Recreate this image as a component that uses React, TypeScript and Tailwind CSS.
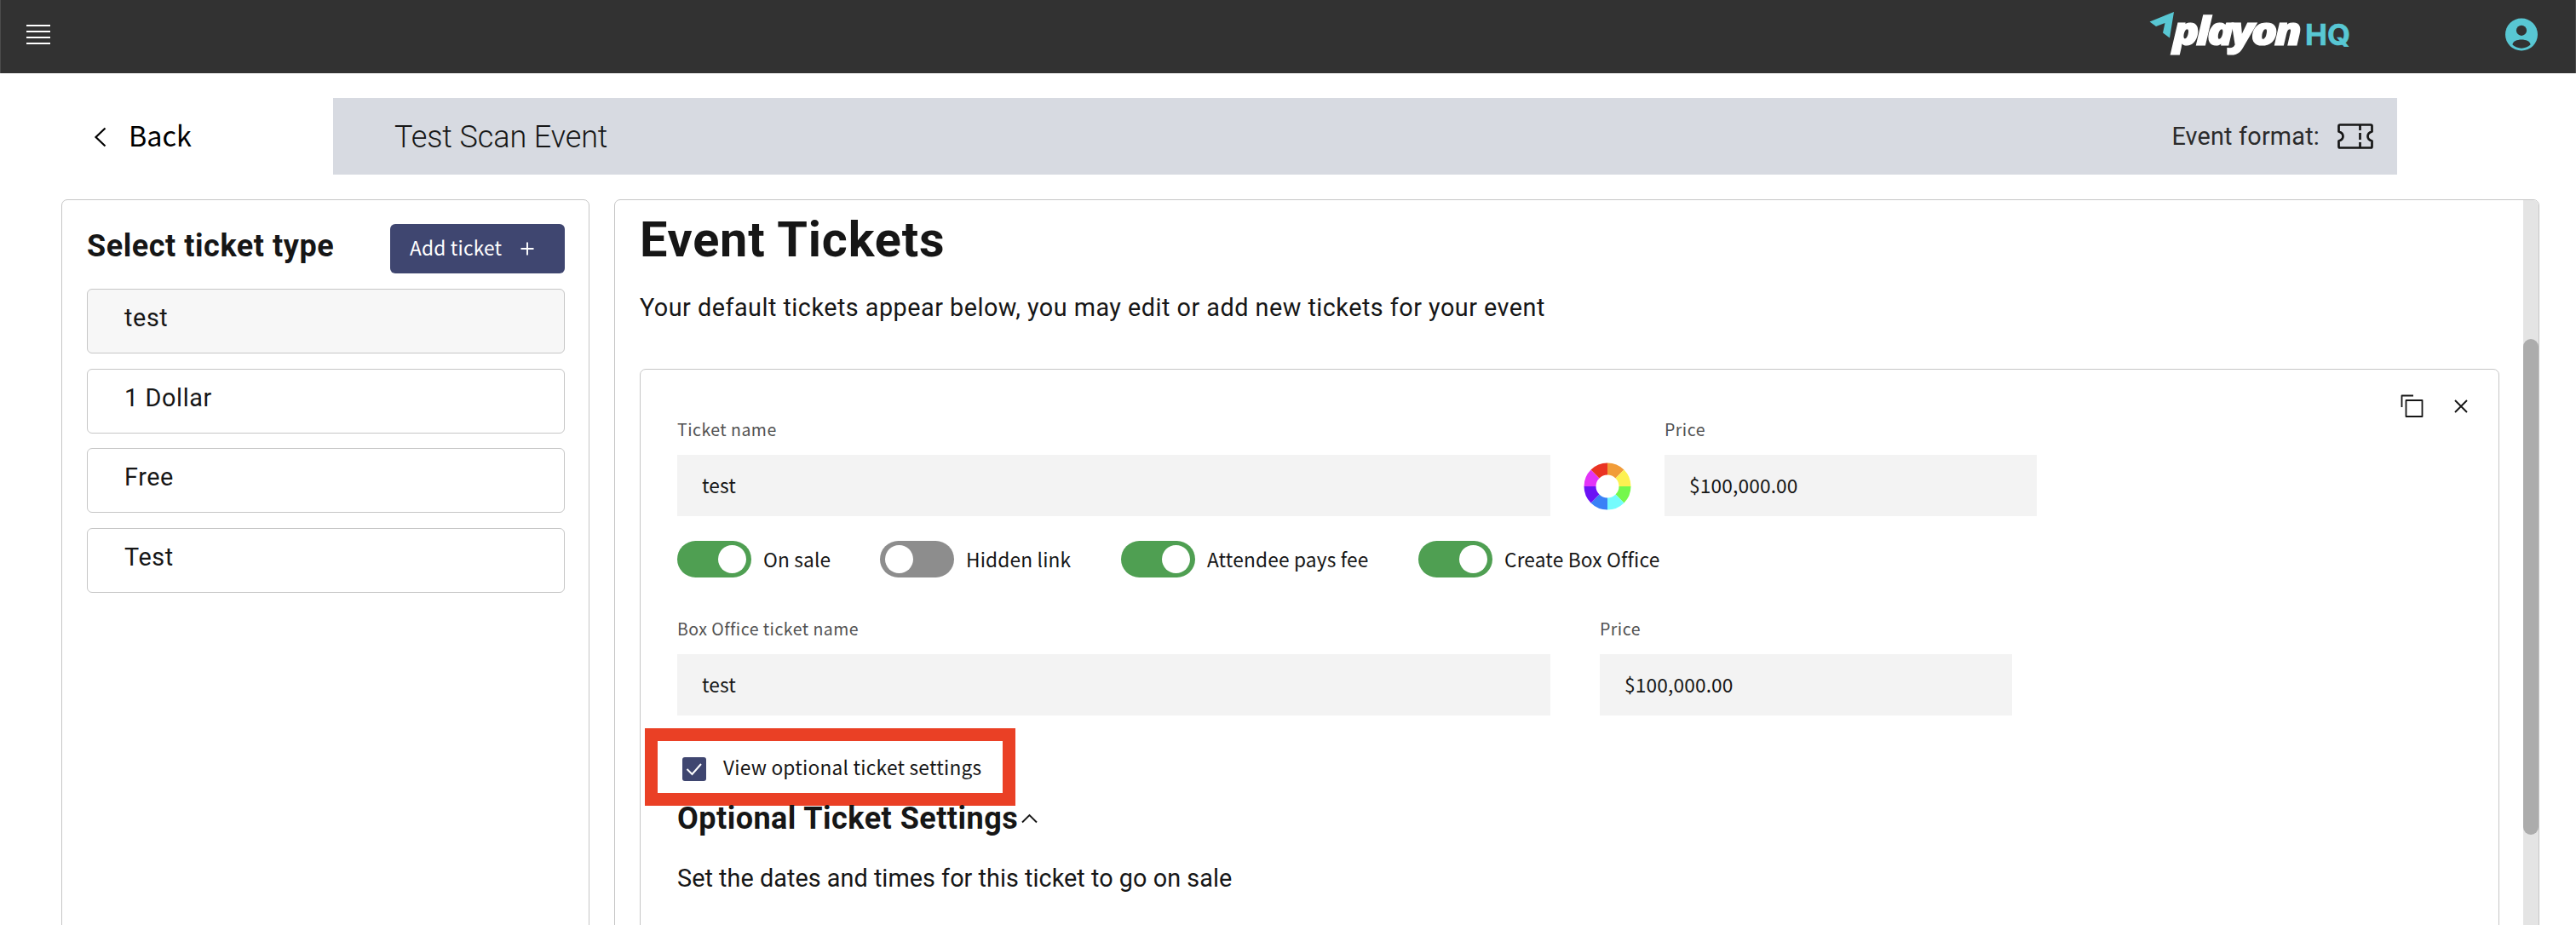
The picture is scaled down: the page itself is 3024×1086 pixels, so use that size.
import type { ReactNode } from "react";

const plex = "font-['Roboto',sans-serif]";
const source = "font-['Noto_Sans_CJK_JP',sans-serif]";

function Line({ className, children }: { className: string; children: ReactNode }) {
  return <div className={`whitespace-nowrap ${className}`}>{children}</div>;
}

function Logo() {
  return (
    <svg width="240" height="86" viewBox="2520 0 240 86" className="block">
      <path d="M2551 14 L2522.5 25.5 L2530 31 L2540.5 27 L2538 38.5 L2546 44.5 Z" fill="#58c7d3" />
      <text transform="translate(2549.5 52.7) scale(1.12 1)" letterSpacing="-3.4" fill="#fff" stroke="#fff" strokeWidth="1.2" fontFamily="Open Sans, sans-serif" fontWeight="800" fontStyle="italic" fontSize="46">playon</text>
      <text x="2705" y="52.7" textLength="53" lengthAdjust="spacingAndGlyphs" fill="#58c7d3" stroke="#58c7d3" strokeWidth="0.6" fontFamily="Inter, sans-serif" fontWeight="700" fontSize="34">HQ</text>
    </svg>
  );
}

function Toggle({ on, label, className }: { on: boolean; label: string; className: string }) {
  return (
    <div className={`flex h-[43px] items-center ${className}`}>
      <div className={`flex h-[43px] w-[87px] shrink-0 items-center rounded-full px-[6px] ${on ? "justify-end bg-[#4f9f52]" : "justify-start bg-[#8d8d8d]"}`}>
        <div className="size-[33px] rounded-full bg-white" />
      </div>
      <Line className={`ml-[14px] mt-px text-[22.7px] leading-[32px] tracking-[0.17px] ${source}`}>{label}</Line>
    </div>
  );
}

function Field({ label, value, className }: { label: string; value: string; className: string }) {
  return (
    <div className={className}>
      <Line className={`-mt-px text-[19.5px] leading-[28px] tracking-[0.48px] text-[#525252] ${source}`}>{label}</Line>
      <div className="mt-[16px] flex h-[72px] items-center bg-[#f3f3f3] pl-[29px]">
        <Line className={`text-[22.7px] leading-[32px] tracking-[0.15px] ${source}`}>{value}</Line>
      </div>
    </div>
  );
}

const wheel = ["#f19c38", "#fdf151", "#75f84c", "#74fbfd", "#3a81f6", "#6b12f5", "#e333f7", "#ea3323"];

function ColorWheel() {
  const p = (r: number, i: number) => {
    const a = (i * Math.PI) / 4;
    return `${28 + r * Math.sin(a)} ${28 - r * Math.cos(a)}`;
  };
  return (
    <svg width="56" height="56" className="block">
      {wheel.map((c, i) => (
        <path key={c} fill={c} d={`M${p(13.5, i)} L${p(27.5, i)} A27.5 27.5 0 0 1 ${p(27.5, i + 1)} L${p(13.5, i + 1)} A13.5 13.5 0 0 0 ${p(13.5, i)}Z`} />
      ))}
    </svg>
  );
}

const tickets = [
  { name: "test", active: true },
  { name: "1 Dollar", active: false },
  { name: "Free", active: false },
  { name: "Test", active: false },
];

export default function App() {
  return (
    <div className="flex h-[1086px] w-[3024px] flex-col overflow-hidden bg-white text-[#161616]">
      <header className="flex h-[86px] shrink-0 items-start border-x border-[#4b4b4b] bg-[#323232]">
        <div className="ml-[30px] mt-[29px] flex flex-col gap-[5px]">
          {[0, 1, 2, 3].map((i) => (
            <div key={i} className="h-[2px] w-[28px] bg-white" />
          ))}
        </div>
        <div className="ml-auto"><Logo /></div>
        <svg width="38" height="40" viewBox="0 0 38 40" className="ml-[180px] mr-[44px] mt-[21px]">
          <circle cx="19" cy="19.5" r="19" fill="#58c7d3" />
          <circle cx="19" cy="14.8" r="6.1" fill="#323232" />
          <path d="M8.5 31.5 C8.5 23.5 29.5 23.5 29.5 31.5 C24 37 14 37 8.5 31.5Z" fill="#323232" />
        </svg>
      </header>

      <div className="mt-[29px] flex h-[90px] shrink-0">
        <div className="flex w-[391px] items-center pl-[110px] text-black">
          <svg width="15" height="24" className="mt-[2px]" fill="none" stroke="currentColor" strokeWidth="2.2"><path d="M13.5 1.5 L2.5 12 L13.5 22.5" /></svg>
          <Line className={`-mt-[4px] ml-[26px] text-[32.4px] leading-[44px] ${source}`}>Back</Line>
        </div>
        <div className="flex w-[2423px] items-center bg-[#d7dae1] pl-[72px]">
          <Line className={`mt-px text-[36px] font-light leading-[44px] tracking-[-0.1px] ${plex}`}>Test Scan Event</Line>
          <Line className={`ml-auto text-[28.8px] leading-[36px] tracking-[0.2px] text-[#2b2b2b] ${plex}`}>Event format:</Line>
          <svg width="42" height="30" viewBox="0 0 42 30" className="ml-[21px] mr-[28px]" fill="none" stroke="#161616" strokeWidth="2.7" strokeLinejoin="round">
            <path d="M3 1.5 H39 Q40.5 1.5 40.5 3 V9.5 Q35.5 11 35.5 15 Q35.5 19 40.5 20.5 V27 Q40.5 28.5 39 28.5 H3 Q1.5 28.5 1.5 27 V20.5 Q6.5 19 6.5 15 Q6.5 11 1.5 9.5 V3 Q1.5 1.5 3 1.5Z" />
            <path d="M26.5 2 V8 M26.5 11 V19 M26.5 22 V28" />
          </svg>
        </div>
      </div>

      <div className="mt-[29px] flex h-[900px] shrink-0 pl-[72px]">
        <aside className="h-full w-[620px] rounded-[7px] border border-[#c6c6c6] pl-[29px] pr-[28px]">
          <div className="mt-[28px] flex h-[58px] items-start justify-between">
            <Line className={`mt-[3px] text-[36px] font-bold leading-[46px] tracking-[0.55px] ${plex}`}>Select ticket type</Line>
            <div className={`flex h-[58px] w-[205px] items-center rounded-[6px] bg-[#3f4670] pl-[23px] text-white ${source}`}>
              <Line className="-mt-[2px] w-[130px] text-[22.7px] leading-[32px] tracking-[0.2px]">Add ticket</Line>
              <svg width="16" height="16" stroke="currentColor" strokeWidth="1.9"><path d="M8 0.5 V15.5 M0.5 8 H15.5" /></svg>
            </div>
          </div>
          <div className="mt-[18px] flex flex-col gap-[17.7px]">
            {tickets.map((t) => (
              <div key={t.name} className={`h-[76px] rounded-[6px] border border-[#c6c6c6] pl-[43px] pt-[14px] ${t.active ? "bg-[#f7f7f7]" : "bg-white"}`}>
                <Line className={`text-[28.8px] leading-[38px] tracking-[0.6px] ${plex}`}>{t.name}</Line>
              </div>
            ))}
          </div>
        </aside>

        <main className="ml-[29px] flex h-full w-[2260px] overflow-hidden rounded-[7px] border border-[#c6c6c6]">
          <div className="w-[2240px] pl-[29px]">
            <Line className={`mt-[11px] text-[57.6px] font-bold leading-[72px] tracking-[0.85px] ${plex}`}>Event Tickets</Line>
            <Line className={`mt-[23px] text-[28.8px] leading-[40px] tracking-[0.48px] ${plex}`}>Your default tickets appear below, you may edit or add new tickets for your event</Line>
            <section className="relative mt-[52px] h-[700px] w-[2183px] rounded-[7px] border border-[#c6c6c6] pl-[43px] pt-[57px]">
              <div className="absolute right-[36px] top-[29px] flex items-center text-[#161616]">
                <svg width="28" height="28" fill="none" stroke="currentColor" strokeWidth="1.8"><path d="M6.5 7 H25.5 V26 H6.5Z M1.5 15 V1.5 H15" strokeLinejoin="round" /></svg>
                <svg width="16" height="16" className="ml-[35px]" stroke="currentColor" strokeWidth="1.9"><path d="M1 1 L15 15 M15 1 L1 15" /></svg>
              </div>
              <div className="flex">
                <Field label="Ticket name" value="test" className="w-[1025px]" />
                <div className="ml-[39px] mt-[52px]"><ColorWheel /></div>
                <Field label="Price" value="$100,000.00" className="ml-[39px] w-[437px]" />
              </div>
              <div className="mt-[29px] flex">
                <Toggle on label="On sale" className="w-[238px]" />
                <Toggle on={false} label="Hidden link" className="w-[283px]" />
                <Toggle on label="Attendee pays fee" className="w-[349px]" />
                <Toggle on label="Create Box Office" className="w-[320px]" />
              </div>
              <div className="mt-[47px] flex">
                <Field label="Box Office ticket name" value="test" className="w-[1025px]" />
                <Field label="Price" value="$100,000.00" className="ml-[58px] w-[484px]" />
              </div>
              <div className="-ml-[38px] mt-[15px] flex h-[91px] w-[435px] items-center border-[15px] border-[#ea4025] pl-[29px]">
                <div className="mt-[5px] flex size-[28px] items-center justify-center rounded-[3px] bg-[#3f4670]">
                  <svg width="20" height="16" fill="none" stroke="#fff" strokeWidth="2"><path d="M1.5 8 L7.5 14 L18 2" /></svg>
                </div>
                <Line className={`ml-[20px] text-[22.7px] leading-[32px] tracking-[0.23px] ${source}`}>View optional ticket settings</Line>
              </div>
              <div className="-mt-[8px] flex items-center">
                <Line className={`text-[36px] font-bold leading-[46px] tracking-[0.47px] ${plex}`}>Optional Ticket Settings</Line>
                <svg width="19" height="12" className="ml-[4px]" fill="none" stroke="currentColor" strokeWidth="1.9"><path d="M1 10.5 L9.5 2 L18 10.5" /></svg>
              </div>
              <Line className={`mt-[27px] text-[28.8px] leading-[40px] tracking-[0.04px] ${plex}`}>Set the dates and times for this ticket to go on sale</Line>
            </section>
          </div>
          <div className="w-[18px] bg-[#e4e4e4] pt-[163px]">
            <div className="h-[582px] rounded-full bg-[#acacac]" />
          </div>
        </main>
      </div>
    </div>
  );
}
